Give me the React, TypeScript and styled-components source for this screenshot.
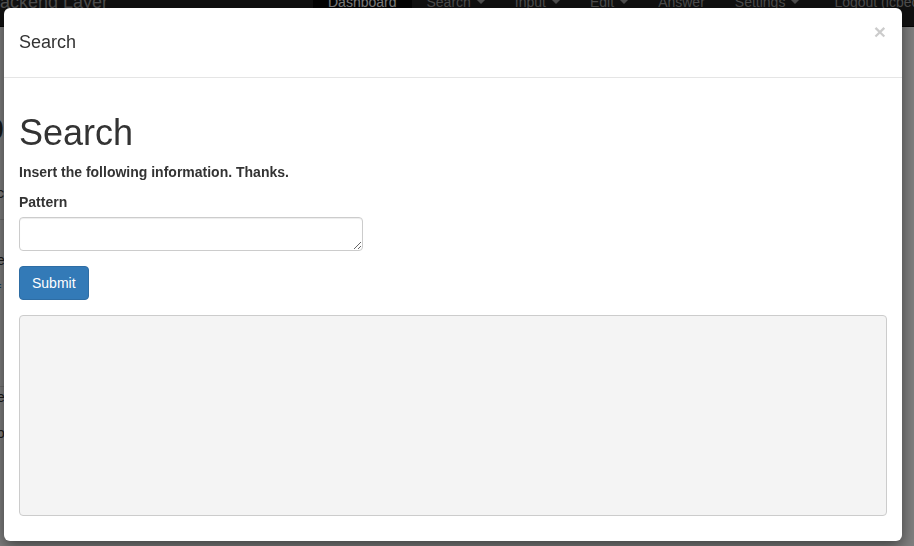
import React from 'react';
import styled, { createGlobalStyle } from 'styled-components';

const GlobalStyle = createGlobalStyle`
  html, body {
    margin: 0;
    padding: 0;
    height: 100%;
    overflow: hidden;
    background: #ffffff;
    font-family: "Liberation Sans", Arial, sans-serif;
    font-size: 14px;
    line-height: 20px;
    color: #333333;
  }
  * { box-sizing: border-box; }
`;

const navItems = [
  { label: 'Dashboard', active: true },
  { label: 'Search', caret: true },
  { label: 'Input', caret: true },
  { label: 'Edit', caret: true },
  { label: 'Answer' },
  { label: 'Settings', caret: true },
  { label: 'Logout (lcbeck)', right: true },
];

// page behind the modal: only its last letters show at the left edge
const leftBits = [
  { text: 'p', big: true, top: 80 },
  { text: 'c', top: 36 },
  { text: 'i', link: true, top: 16, rule: true },
  { text: 'e', top: 10 },
  { text: 'f', link: true, top: 10 },
  { text: 'e', top: 86, rule: true },
  { text: 'o', top: 16 },
];

const Page = styled.div`
  display: flex;
  flex-direction: column;
  height: 100vh;
  overflow: hidden;
`;

const NavBar = styled.nav`
  display: flex;
  align-items: center;
  height: 50px;
  margin-top: -23px;
  background: #222222;
  border-bottom: 1px solid #080808;
  white-space: nowrap;
  overflow: hidden;
`;

const Brand = styled.div`
  flex: 0 0 325px;
  margin-left: -12px;
  font-size: 18px;
  color: #9d9d9d;
`;

const NavItem = styled.div<{ $active?: boolean; $right?: boolean }>`
  display: flex;
  align-items: center;
  height: 50px;
  padding: 0 15px;
  margin-left: ${(p) => (p.$right ? '5px' : '0')};
  color: ${(p) => (p.$active ? '#ffffff' : '#9d9d9d')};
  background: ${(p) => (p.$active ? '#080808' : 'transparent')};
`;

const Caret = styled.span`
  display: inline-block;
  margin-left: 6px;
  border-top: 4px solid currentColor;
  border-left: 4px solid transparent;
  border-right: 4px solid transparent;
`;

const Strip = styled.div`
  width: 5px;
  overflow: hidden;
  display: flex;
  flex-direction: column;
  white-space: nowrap;
`;

const StripLine = styled.div<{ $big?: boolean; $link?: boolean; $rule?: boolean }>`
  font-size: ${(p) => (p.$big ? '36px' : '14px')};
  line-height: ${(p) => (p.$big ? '40px' : '20px')};
  color: ${(p) => (p.$link ? '#337ab7' : '#333333')};
  border-top: ${(p) => (p.$rule ? '1px solid #dddddd' : 'none')};
  margin-left: ${(p) => (p.$big ? '-16px' : '-3px')};
`;

const Backdrop = styled.div`
  position: fixed;
  inset: 0;
  background: rgba(0, 0, 0, 0.5);
`;

const ModalLayer = styled.div`
  position: fixed;
  inset: 0;
  padding: 8px 0 0 4px;
`;

const Dialog = styled.div`
  width: 898px;
  height: 533px;
  background: #ffffff;
  border-radius: 6px;
  box-shadow: 0 5px 15px rgba(0, 0, 0, 0.5);
  display: flex;
  flex-direction: column;
  overflow: hidden;
`;

const Header = styled.div`
  display: flex;
  justify-content: space-between;
  align-items: flex-start;
  height: 70px;
  padding: 21px 15px 22px;
  border-bottom: 1px solid #e5e5e5;
`;

const Title = styled.h4`
  margin: 0;
  font-size: 18px;
  font-weight: 500;
  line-height: 26px;
  color: #333333;
`;

const Close = styled.button`
  margin-top: -8px;
  margin-right: 1px;
  padding: 0;
  border: 0;
  background: transparent;
  font-family: "Liberation Sans", Arial, sans-serif;
  font-size: 21px;
  font-weight: 700;
  line-height: 1;
  color: #000000;
  opacity: 0.2;
  cursor: pointer;
`;

const Body = styled.div`
  flex: 1;
  display: flex;
  flex-direction: column;
  padding: 35px 15px 25px;
`;

const Heading = styled.h1`
  margin: 0 0 9px;
  font-size: 36px;
  font-weight: 500;
  line-height: 40px;
  color: #333333;
`;

const Lead = styled.p`
  margin: 0 0 10px;
  font-weight: 700;
`;

const Label = styled.label`
  display: block;
  margin-bottom: 5px;
  font-weight: 700;
`;

const TextArea = styled.textarea`
  display: block;
  width: 344px;
  height: 34px;
  margin: 0 0 15px;
  padding: 6px 12px;
  font-family: inherit;
  font-size: 14px;
  color: #555555;
  background: #ffffff;
  border: 1px solid #cccccc;
  border-radius: 4px;
  box-shadow: inset 0 1px 1px rgba(0, 0, 0, 0.075);
`;

const Button = styled.button`
  align-self: flex-start;
  height: 34px;
  margin-bottom: 15px;
  padding: 6px 12px;
  font-family: inherit;
  font-size: 14px;
  line-height: 20px;
  color: #ffffff;
  background: #337ab7;
  border: 1px solid #2e6da4;
  border-radius: 4px;
  cursor: pointer;
`;

const Output = styled.div`
  flex: 1;
  background: #f4f4f4;
  border: 1px solid #cccccc;
  border-radius: 4px;
`;

export default function App() {
  return (
    <>
      <GlobalStyle />
      <Page>
        <NavBar>
          <Brand>Backend Layer</Brand>
          {navItems.map((item) => (
            <NavItem key={item.label} $active={item.active} $right={item.right}>
              {item.label}
              {item.caret && <Caret />}
            </NavItem>
          ))}
        </NavBar>
        <Strip>
          {leftBits.map((b, i) => (
            <StripLine key={i} $big={b.big} $link={b.link} $rule={b.rule} style={{ marginTop: b.top }}>
              {b.text}
            </StripLine>
          ))}
        </Strip>
      </Page>
      <Backdrop />
      <ModalLayer>
        <Dialog>
          <Header>
            <Title>Search</Title>
            <Close aria-label="Close">×</Close>
          </Header>
          <Body>
            <Heading>Search</Heading>
            <Lead>Insert the following information. Thanks.</Lead>
            <Label htmlFor="pattern">Pattern</Label>
            <TextArea id="pattern" />
            <Button>Submit</Button>
            <Output />
          </Body>
        </Dialog>
      </ModalLayer>
    </>
  );
}
